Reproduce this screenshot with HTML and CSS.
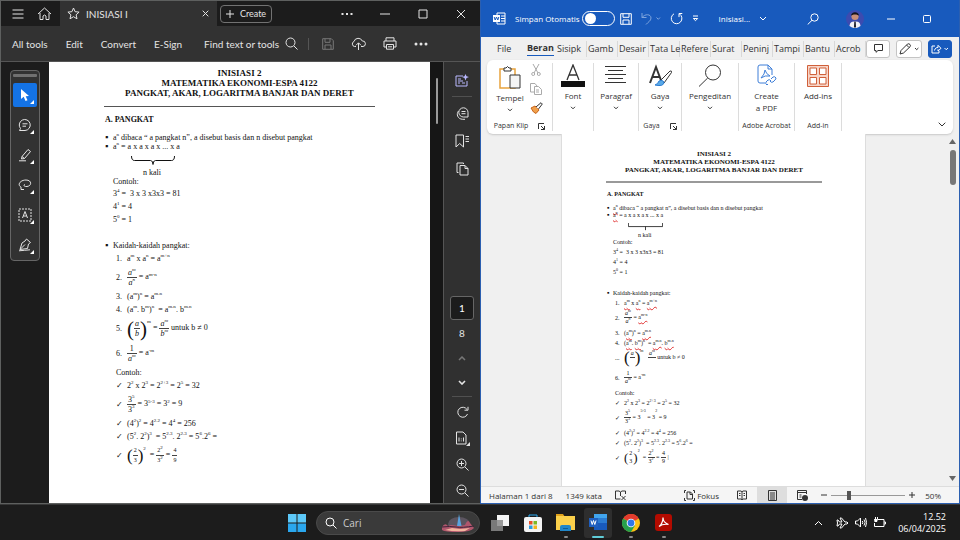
FILE: index.html
```html
<!DOCTYPE html>
<html lang="id">
<head>
    <meta charset="UTF-8">
    <meta name="viewport" content="width=device-width, initial-scale=1.0">
    <title>Inisiasi 2</title>
    <link rel="stylesheet" href="styles.css">
</head>
<body>
<div class="desktop">
    <div class="windows">

        <!-- PDF reader -->
        <section class="reader">
            <header class="reader-title">
                <button class="icon-btn" aria-label="Menu"><svg width="12" height="12" viewBox="0 0 12 12"><path d="M.5 2h11M.5 6h11M.5 10h11"/></svg></button>
                <button class="icon-btn" aria-label="Home"><svg width="15" height="14" viewBox="0 0 15 14"><path d="M1 7 7.500 1 14 7M3 6v6.500h3V9q1.500-2 3 0v3.500h3V6"/></svg></button>
                <div class="reader-tab">
                    <svg width="13" height="13" viewBox="0 0 13 13"><path d="m6.500 1 1.600 3.700 4 .4-3 2.700.9 4-3.500-2.100L3 11.800l.9-4-3-2.700 4-.4z"/></svg>
                    <span class="tab-name">INISIASI I</span>
                    <button class="icon-btn small" aria-label="Close tab"><svg width="7" height="7" viewBox="0 0 7 7"><path d="m.7.7 5.600 5.600M6.300.7.7 6.300"/></svg></button>
                </div>
                <button class="create"><svg width="8" height="8" viewBox="0 0 8 8"><path d="M4 0v8M0 4h8"/></svg>Create</button>
                <div class="win-buttons">
                    <button aria-label="More"><svg width="12" height="4" viewBox="0 0 12 4"><path class="solid" d="M.5 1h2v2h-2zM5 1h2v2H5zM9.500 1h2v2h-2z"/></svg></button>
                    <button aria-label="Minimize"><svg width="10" height="4" viewBox="0 0 10 4"><path d="M0 2h10"/></svg></button>
                    <button aria-label="Maximize"><svg width="10" height="10" viewBox="0 0 10 10"><path d="M1 1h8v8H1z"/></svg></button>
                    <button aria-label="Close"><svg width="10" height="10" viewBox="0 0 10 10"><path d="m1 1 8 8M9 1 1 9"/></svg></button>
                </div>
            </header>

            <nav class="reader-bar">
                <button>All tools</button>
                <button>Edit</button>
                <button>Convert</button>
                <button>E-Sign</button>
                <button class="find">Find text or tools<svg width="13" height="13" viewBox="0 0 13 13"><circle cx="5.500" cy="5.500" r="4.500"/><path d="m9 9 3.500 3.500"/></svg></button>
                <div class="bar-icons">
                    <button class="dim" aria-label="Save"><svg width="12" height="12" viewBox="0 0 12 12"><path d="M.7.7h8.600l2 2v8.600H.7zM3 .7v3.600h5V.7M3 11V7h6v4"/></svg></button>
                    <button aria-label="Upload"><svg width="15" height="13" viewBox="0 0 15 13"><path d="M5 9.500H3.500A2.600 2.600 0 0 1 3 4.500 4.400 4.400 0 0 1 11.300 4a2.700 2.700 0 0 1 .7 5.500h-2M7.500 13V6M5 8.300l2.500-2.500L10 8.300"/></svg></button>
                    <button aria-label="Print"><svg width="14" height="13" viewBox="0 0 14 13"><path d="M3 4V.8h8V4M3 10H1V4h12v6h-2M3.500 7.500h7v4.700h-7zM5 9.800h4"/></svg></button>
                    <button aria-label="More tools"><svg width="14" height="4" viewBox="0 0 14 4"><circle class="solid" cx="2" cy="2" r="1.500"/><circle class="solid" cx="7" cy="2" r="1.500"/><circle class="solid" cx="12" cy="2" r="1.500"/></svg></button>
                </div>
            </nav>

            <div class="reader-body">
                <aside class="left-strip">
                    <div class="palette">
                        <span class="grip"></span>
                        <button class="active" aria-label="Select"><svg width="10" height="14" viewBox="0 0 10 14"><path class="solid" d="M1 1v10l2.700-2.200L5.500 13l2-.8-1.800-4L9 8z"/></svg></button>
                        <button aria-label="Comment"><svg width="14" height="14" viewBox="0 0 14 14"><path d="M7 12.500H1.500l1-2A5.500 5.500 0 1 1 7 12.500zM4.500 5.800h5M4.500 8.200h3.500"/></svg></button>
                        <button aria-label="Highlight"><svg width="14" height="14" viewBox="0 0 14 14"><path d="M4 8.500 10 1.500l2.500 2-6 7-3 .5zM1 12.800h7M4 8.500l2.500 2"/></svg></button>
                        <button aria-label="Draw"><svg width="14" height="12" viewBox="0 0 14 12"><path d="M3 8C-1 6 2 1 8 1c6 0 6 6 1 6.500-3 .3-4-1.500-2-2M3 8v2.500h3"/></svg></button>
                        <button aria-label="Text box"><svg width="14" height="14" viewBox="0 0 14 14"><path stroke-dasharray="2 1" d="M1 1h12v12H1z"/><path d="m4.500 10 2.500-6.500L9.500 10M5.400 8h3.200"/></svg></button>
                        <button aria-label="Sign"><svg width="14" height="14" viewBox="0 0 14 14"><path d="m8.500 1 4 3.500-2 1.500-1 4.500L2 11.500 4 5l3-2zM2 11.500 7 6.500M1 12.800c4 0 7-1 11-1"/></svg></button>
                    </div>
                </aside>

                <div class="reader-page">
                    <article class="doc doc-large">
                        <h1>INISIASI 2<br>MATEMATIKA EKONOMI-ESPA 4122<br>PANGKAT, AKAR, LOGARITMA BANJAR DAN DERET</h1>
                        <h2>A. PANGKAT</h2>
                        <p class="line"><b class="dot">▪</b><span>a<sup>n</sup> dibaca “ a pangkat n”, a disebut basis dan n disebut pangkat</span></p>
                        <p class="line"><b class="dot">▪</b><span>a<sup>n</sup> = a x a x a x ... x a</span></p>
                        <div class="brace"><svg viewBox="0 0 44 10"><path d="M.5 0q0 4.500 3 4.500h16q2.500 0 2.500 4 0-4 2.500-4h16q3 0 3-4.500"/></svg></div>
                        <p class="line under">n kali</p>
                        <p class="line in">Contoh:</p>
                        <p class="step in first">3<sup>4</sup> =&nbsp; 3 x 3 x3x3 = 81</p>
                        <p class="step in">4<sup>1</sup> = 4</p>
                        <p class="step in">5<sup>0</sup> = 1</p>
                        <p class="step rules"><b class="dot">▪</b><span>Kaidah-kaidah pangkat:</span></p>
                        <p class="step item"><i>1.</i><span>a<sup>m</sup> x a<sup>n</sup> = a<sup>m+n</sup></span></p>
                        <p class="tall item"><i>2.</i><span><span class="frac var"><span>a<sup>m</sup></span><span>a<sup>n</sup></span></span> = a<sup>m-n</sup></span></p>
                        <p class="step item"><i>3.</i><span>(a<sup>m</sup>)<sup>n</sup> = a<sup>m.n</sup></span></p>
                        <p class="step item"><i>4.</i><span>(a<sup>m</sup>. b<sup>m</sup>)<sup>n</sup>&nbsp; = a<sup>m.n</sup>. b<sup>m.n</sup></span></p>
                        <p class="tall item"><i>5.</i><span><span class="big">(</span><span class="frac var"><span>a</span><span>b</span></span><span class="big">)</span><sup class="high">m</sup> = <span class="frac var"><span>a<sup>m</sup></span><span>b<sup>m</sup></span></span> untuk b ≠ 0</span></p>
                        <p class="tall item"><i>6.</i><span><span class="frac"><span>1</span><span class="var">a<sup>m</sup></span></span> = a<sup>-m</sup></span></p>
                        <p class="step sub">Contoh:</p>
                        <p class="step item"><i>✓</i><span>2<sup>2</sup> x 2<sup>3</sup> = 2<sup>2+3</sup> = 2<sup>5</sup> = 32</span></p>
                        <p class="tall item"><i>✓</i><span><span class="frac"><span>3<sup>5</sup></span><span>3<sup>3</sup></span></span> = 3<sup>5-3</sup> = 3<sup>2</sup> = 9</span></p>
                        <p class="step item"><i>✓</i><span>(4<sup>2</sup>)<sup>2</sup> = 4<sup>2.2</sup> = 4<sup>4</sup> = 256</span></p>
                        <p class="step item"><i>✓</i><span>(5<sup>2</sup>. 2<sup>2</sup>)<sup>3</sup>&nbsp; = 5<sup>2.3</sup>. 2<sup>2.3</sup> = 5<sup>6</sup>.2<sup>6</sup> =</span></p>
                        <p class="tall item"><i>✓</i><span><span class="mid">(</span><span class="frac tiny"><span>2</span><span>3</span></span><span class="mid">)</span><sup class="high">2</sup>&nbsp; = <span class="frac tiny"><span>2<sup>2</sup></span><span>3<sup>2</sup></span></span> = <span class="frac tiny"><span>4</span><span>9</span></span></span></p>
                    </article>
                </div>

                <div class="reader-scroll"><span></span></div>

                <aside class="right-strip">
                    <div class="strip-group panels">
                        <button class="lilac" aria-label="AI assistant"><svg width="14" height="13" viewBox="0 0 14 13"><path d="M8 2H1v10h11V7M3 5h3M3 9h2M7 9h3M3 7h5"/><path class="solid" d="m10.500 0 1 2.200L14 3l-2.500 1-1 2.500-1-2.500L7 3l2.500-.8z"/></svg></button>
                        <hr>
                        <button aria-label="Comments"><svg width="13" height="13" viewBox="0 0 13 13"><path d="M7.500 10A4.600 4.600 0 1 1 12 5.500V10zM5.500 4.500h4M5.500 6.700h4M2.500 4C0 7 1.500 12 6.500 12.300H9"/></svg></button>
                        <button aria-label="Bookmarks"><svg width="14" height="14" viewBox="0 0 14 14"><path d="M1 1h7.500v12L4.700 9.500 1 13zM10.500 2.500H14M10.500 5H14M10.500 7.500H14"/></svg></button>
                        <button aria-label="Pages"><svg width="13" height="14" viewBox="0 0 13 14"><path d="M4 3.500h5l3 3V13H4zM9 3.500v3h3M2.500 10.500H1V1h6.500v1"/></svg></button>
                    </div>
                    <div class="strip-group">
                        <input class="page-no" type="text" value="1" aria-label="Page">
                        <span class="page-count">8</span>
                        <button class="turn dim" aria-label="Previous page"><svg width="8" height="5" viewBox="0 0 8 5"><path stroke-width="1.500" d="m1 4 3-3 3 3"/></svg></button>
                        <button class="turn" aria-label="Next page"><svg width="8" height="5" viewBox="0 0 8 5"><path stroke-width="1.600" d="m1 1 3 3 3-3"/></svg></button>
                        <hr>
                        <button aria-label="Rotate"><svg width="13" height="13" viewBox="0 0 13 13"><path d="M11 3.500A5 5 0 1 0 11.500 8M12 .8v3.400H8.500"/></svg></button>
                        <button aria-label="Actual size"><svg width="15" height="15" viewBox="0 0 15 15"><path d="M1.500 1H8l3 3v9H1.500zM4 6.500v4M8.500 6.500v4M6.300 7.500v.8M6.300 9.500v.8"/><path class="solid" d="M15 11v4h-4z"/></svg></button>
                        <button aria-label="Zoom in"><svg width="13" height="13" viewBox="0 0 13 13"><circle cx="5.500" cy="5.500" r="4.500"/><path d="m9 9 3.500 3.500M3 5.500h5M5.500 3v5"/></svg></button>
                        <button aria-label="Zoom out"><svg width="13" height="13" viewBox="0 0 13 13"><circle cx="5.500" cy="5.500" r="4.500"/><path d="m9 9 3.500 3.500M3 5.500h5"/></svg></button>
                    </div>
                </aside>
            </div>
        </section>

        <!-- Word processor -->
        <section class="word">
            <header class="word-title">
                <svg width="13" height="13" viewBox="0 0 13 13"><path d="M4 3V1h8v11H4v-2M8 4h4M8 6.500h4M8 9h4"/><path fill="#fff" stroke="none" d="M0 3h7v7H0z"/><path stroke="#185abd" d="m1.200 5 1 3 1.300-3 1.300 3 1-3"/></svg>
                <label class="autosave">Simpan Otomatis<input type="checkbox" role="switch"></label>
                <button aria-label="Simpan"><svg width="12" height="12" viewBox="0 0 12 12"><path d="M.7.7h10.600v10.600H.7zM3 .7v3.600h6V.7M3 11V7h6v4"/></svg></button>
                <button class="faded" aria-label="Urungkan"><svg width="20" height="13" viewBox="0 0 20 13"><path d="M1 1v4.500h4.500M1 5.500C4 1.500 10 2 10 6c0 3-3 4-5 6.500M15.500 5.500l1.800 1.800L19 5.500"/></svg></button>
                <button aria-label="Ulangi"><svg width="13" height="13" viewBox="0 0 13 13"><path d="M4 1.800A5.300 5.300 0 1 0 9.500 2M12.300 1.500H9v3.600"/></svg></button>
                <button aria-label="Kustomisasi"><svg width="7" height="7" viewBox="0 0 7 7"><path d="M1 1h5M1.300 3.500h4.400L3.500 5.700z"/></svg></button>
                <button class="file-name">Inisiasi...<svg width="8" height="5" viewBox="0 0 8 5"><path d="m1 1 3 3 3-3"/></svg></button>
                <div class="word-right">
                    <button aria-label="Cari"><svg width="12" height="12" viewBox="0 0 12 12"><circle cx="7.500" cy="4.500" r="3.700"/><path d="M5 7.300.7 11.500"/></svg></button>
                    <button aria-label="Akun"><svg width="18" height="18" viewBox="0 0 18 18"><circle cx="9" cy="9" r="9" fill="#3c4bb0" stroke="none"/><path d="M3.500 16c.5-4 2.500-4.500 5.500-4.500s5 .5 5.500 4.500a9 9 0 0 1-11 0" fill="#f2f2f8" stroke="none"/><circle cx="9" cy="6.500" r="3.600" fill="#c98f77" stroke="none"/><path d="M5 6c0-5 8-5 8 0-1-2-7-2-8 0" fill="#17151c" stroke="none"/><path d="M8.300 11.500h1.400l.4 6H7.900z" fill="#20222e" stroke="none"/></svg></button>
                    <button aria-label="Minimalkan"><svg width="8" height="4" viewBox="0 0 8 4"><path d="M0 2h8"/></svg></button>
                    <button aria-label="Maksimalkan"><svg width="8" height="8" viewBox="0 0 8 8"><rect x=".5" y=".5" width="7" height="7" rx="1"/></svg></button>
                </div>
            </header>

            <nav class="word-tabs">
                <button class="file">File</button>
                <button class="current"><span>Beran</span></button>
                <button>Sisipk</button>
                <button>Gamb</button>
                <button>Desair</button>
                <button>Tata Le</button>
                <button>Refere</button>
                <button>Surat</button>
                <button>Peninj</button>
                <button>Tampi</button>
                <button>Bantu</button>
                <button>Acrob</button>
                <div class="tab-actions">
                    <button aria-label="Komentar"><svg width="9" height="9" viewBox="0 0 9 9"><path d="M.5.5h8v6H4L2 8.300V6.500H.5z"/></svg></button>
                    <button aria-label="Pengeditan"><svg width="20" height="12" viewBox="0 0 20 12"><path d="m1 11 1-3.500L8.500 1Q10 .3 11 1.500t0 2.300L4.500 10zM7.500 2l2.500 2.500M16 5l1.700 1.700L19.400 5"/></svg></button>
                    <button class="share" aria-label="Bagikan"><svg width="18" height="10" viewBox="0 0 18 10"><path d="M4 2H1v7h7V7M3.500 6.500C4 4 5.500 3.500 7 3.500V1.300l3 3-3 2.700V5.300M13.500 4l1.700 1.700L17 4"/></svg></button>
                </div>
            </nav>

            <div class="ribbon">
                <div class="group clip">
                    <div class="clip-tools">
                        <button class="tool"><svg width="22" height="23" viewBox="0 0 22 23"><path fill="#fff" stroke="#e8a33d" stroke-width="1.500" d="M1 3h15v19H1z"/><path fill="#fff" d="M5 2h2q1.500-3 3 0h2v3H5z"/><path fill="#f4f4f4" d="M11 9h10v13H11z"/></svg>Tempel<svg class="chev" width="6" height="4" viewBox="0 0 6 4"><path d="m1 .8 2 2 2-2"/></svg></button>
                        <div class="clip-side">
                            <button class="pale" aria-label="Potong"><svg width="10" height="12" viewBox="0 0 10 12"><path d="M2 0l5 9M8 0 3 9"/><circle cx="2.200" cy="10" r="1.500"/><circle cx="7.800" cy="10" r="1.500"/></svg></button>
                            <button class="pale" aria-label="Salin"><svg width="12" height="12" viewBox="0 0 12 12"><path d="M4 9H.5V.5H5L7 3M4.500 3.500h4l3 3v5h-7zM6 7h3M6 9h3"/></svg></button>
                            <button aria-label="Pemformat"><svg width="13" height="12" viewBox="0 0 13 12"><path fill="#f0a04b" stroke="#c8641b" d="m1 6 4-2 4 4-3 3.500L3.500 10z"/><path fill="#fff" d="M6 5 11 .7l1.300 1.300L8.500 7"/></svg></button>
                        </div>
                    </div>
                    <span class="caption">Papan Klip<svg width="7" height="7" viewBox="0 0 7 7"><path d="M.5 6V.5H6M3 3l3.500 3.500M6.500 3v3.500H3"/></svg></span>
                </div>
                <div class="group font">
                    <button class="tool"><svg width="24" height="23" viewBox="0 0 24 23"><path stroke-width="1.300" d="m6 16 6-15 6 15M8 11h8"/><path fill="#111" stroke="none" d="M0 17h24v6H0z"/></svg>Font<svg class="chev" width="6" height="4" viewBox="0 0 6 4"><path d="m1 .8 2 2 2-2"/></svg></button>
                </div>
                <div class="group para">
                    <button class="tool"><svg width="21" height="23" viewBox="0 0 21 23"><path d="M0 2.500h21M3 6.500h15M0 10.500h21M3 14.500h15M0 18.500h21"/></svg>Paragraf<svg class="chev" width="6" height="4" viewBox="0 0 6 4"><path d="m1 .8 2 2 2-2"/></svg></button>
                </div>
                <div class="group style">
                    <button class="tool"><svg width="23" height="23" viewBox="0 0 23 23"><path stroke-width="2" d="M1 19 7 3l6 16M3 13h8"/><path fill="#fff" d="M12 16 21 7q2-.5 1.500 1.500L15 19z"/><path fill="#5aa9e6" stroke="#2b7cd3" d="M6 21q3-1 4-4 3-2 5 1 0 5-9 3z"/></svg>Gaya<svg class="chev" width="6" height="4" viewBox="0 0 6 4"><path d="m1 .8 2 2 2-2"/></svg></button>
                    <span class="caption">Gaya<svg width="7" height="7" viewBox="0 0 7 7"><path d="M.5 6V.5H6M3 3l3.500 3.500M6.500 3v3.500H3"/></svg></span>
                </div>
                <div class="group edit">
                    <button class="tool"><svg width="24" height="23" viewBox="0 0 24 23"><circle cx="15" cy="8.500" r="7.500"/><path d="M9.700 14 1 22.500"/></svg>Pengeditan<svg class="chev" width="6" height="4" viewBox="0 0 6 4"><path d="m1 .8 2 2 2-2"/></svg></button>
                </div>
                <div class="group acro">
                    <button class="tool"><svg class="pdf" width="20" height="23" viewBox="0 0 20 23"><path d="M8 19H3q-2 0-2-2V3q0-2 2-2h8l4 4v6M11 1v4h4"/><path d="M4 14q4-4 4-8 1 4 5 6-5-1-9 2M11 20l-1 1q-2-1-1-3l2-2q2-1 3 1M14 15l2-2q2-1 3 1 0 1-1 2l-2 2q-2 1-3-1"/></svg><span>Create<br>a PDF</span></button>
                    <span class="caption">Adobe Acrobat</span>
                </div>
                <div class="group addin">
                    <button class="tool"><svg class="grid-icon" width="22" height="23" viewBox="0 0 22 23"><path fill="#f8d5c8" d="M.5 1.500h21v21H.5z"/><path fill="#fff" d="M3 4h6.500v6.500H3zM12.500 4H19v6.500h-6.500zM3 13.500h6.500V20H3zM12.500 13.500H19V20h-6.500z"/></svg>Add-ins</button>
                    <span class="caption">Add-in</span>
                </div>
                <button class="collapse" aria-label="Ciutkan pita"><svg width="8" height="5" viewBox="0 0 8 5"><path d="m.7.7 3.300 3.300L7.300.7"/></svg></button>
            </div>

            <div class="word-body">
                <div class="word-page">
                    <article class="doc doc-small">
                        <h1>INISIASI 2<br>MATEMATIKA EKONOMI-ESPA 4122<br>PANGKAT, AKAR, LOGARITMA BANJAR DAN DERET</h1>
                        <h2>A. PANGKAT</h2>
                        <p class="line"><b class="dot">▪</b><span><u>a<sup>n</sup></u> dibaca “ a pangkat n”, a disebut basis dan n disebut pangkat</span></p>
                        <p class="line"><b class="dot">▪</b><span><u>a<sup>n</sup></u> = a x a x a x ... x a</span></p>
                        <div class="brace"><svg viewBox="0 0 44 10"><path d="M.5 0v4.500h43V0M22 4.500V9"/></svg></div>
                        <p class="line under">n kali</p>
                        <p class="line in">Contoh:</p>
                        <p class="step in first">3<sup>4</sup> =&nbsp; 3 x 3 x3x3 = 81</p>
                        <p class="step in">4<sup>1</sup> = 4</p>
                        <p class="step in">5<sup>0</sup> = 1</p>
                        <p class="step rules"><b class="dot">▪</b><span>Kaidah-kaidah pangkat:</span></p>
                        <p class="step item"><i>1.</i><span><u>a<sup>m</sup></u> x <u>a<sup>n</sup></u> = <u>a<sup>m+n</sup></u></span></p>
                        <p class="tall item"><i>2.</i><span><span class="frac var"><span>a<sup>m</sup></span><span>a<sup>n</sup></span></span> = <u>a<sup>m-n</sup></u></span></p>
                        <p class="step item"><i>3.</i><span>(<u>a<sup>m</sup></u>)<sup>n</sup> = <u>a<sup>m.n</sup></u></span></p>
                        <p class="step item"><i>4.</i><span>(<u>a<sup>m</sup></u>. <u>b<sup>m</sup></u>)<sup>n</sup>&nbsp; = <u>a<sup>m.n</sup></u>. <u>b<sup>m.n</sup></u></span></p>
                        <p class="tall item"><i>...</i><span><span class="big">(</span><span class="frac var"><span>a</span><span>&nbsp;</span></span><span class="big">)</span><sup class="high">m</sup>&nbsp;&nbsp; <span class="frac var"><span>a<sup>m</sup></span><span>&nbsp;</span></span> untuk b ≠ 0</span></p>
                        <p class="tall item"><i>6.</i><span><span class="frac"><span>1</span><span class="var">a<sup>m</sup></span></span> = a<sup>-m</sup></span></p>
                        <p class="step sub">Contoh:</p>
                        <p class="step item"><i>✓</i><span>2<sup>2</sup> x 2<sup>3</sup> = 2<sup>2+3</sup> = 2<sup>5</sup> = 32</span></p>
                        <p class="tall item"><i>✓</i><span><span class="frac"><span>3<sup>5</sup></span><span>3<sup>3</sup></span></span> = 3<sup class="high">5-3</sup> = 3<sup class="high">2</sup> = 9</span></p>
                        <p class="step item"><i>✓</i><span>(4<sup>2</sup>)<sup>2</sup> = 4<sup>2.2</sup> = 4<sup>4</sup> = 256</span></p>
                        <p class="step item"><i>✓</i><span>(5<sup>2</sup>. 2<sup>2</sup>)<sup>3</sup>&nbsp; = 5<sup>2.3</sup>. 2<sup>2.3</sup> = 5<sup>6</sup>.2<sup>6</sup> =</span></p>
                        <p class="tall item"><i>✓</i><span><span class="mid">(</span><span class="frac tiny bare"><span>2</span><span>3</span></span><span class="mid">)</span><sup class="high">2</sup>&nbsp; = <span class="frac tiny"><span>2<sup>2</sup></span><span>3<sup>2</sup></span></span> = <span class="frac tiny"><span>4</span><span>9</span></span> |</span></p>
                    </article>
                </div>
                <div class="word-scroll">
                    <svg width="7" height="5" viewBox="0 0 7 5"><path class="solid" d="M0 5 3.500 0 7 5z"/></svg>
                    <span></span>
                    <svg width="7" height="5" viewBox="0 0 7 5"><path class="solid" d="M0 0 3.500 5 7 0z"/></svg>
                </div>
            </div>

            <footer class="status">
                <span>Halaman 1 dari 8</span>
                <span>1349 kata</span>
                <button aria-label="Pemeriksaan"><svg width="11" height="10" viewBox="0 0 11 10"><path d="M5.500 9H.5V1h3.500l1.500 1L7 1h3.500v3M5.500 2v4M6.500 6l4 4M10.500 6l-4 4"/></svg></button>
                <div class="status-right">
                    <button class="focus"><svg width="11" height="11" viewBox="0 0 11 11"><path d="M.5 3V.5H2M9 .5h1.500V3M.5 8v2.500H2M9 10.500h1.500V8M3 2h3.500L8.500 4v5H3zM6 2v2.500h2.500"/></svg>Fokus</button>
                    <button class="view" aria-label="Mode baca"><svg width="10" height="10" viewBox="0 0 10 10"><path d="M.5 1H4l1 .8L6 1h3.500v8H6l-1 .8L4 9H.5zM5 2v7.500M2 3.500h1.500M2 5.500h1.500M6.500 3.500H8M6.500 5.500H8"/></svg></button>
                    <button class="view on" aria-label="Tata letak cetak"><svg width="9" height="11" viewBox="0 0 9 11"><path d="M.5.5h8v10h-8zM2 3h5M2 5h5M2 7h5M2 9h5"/></svg></button>
                    <button class="view" aria-label="Tata letak web"><svg width="11" height="11" viewBox="0 0 11 11"><path d="M5 9.500H.5v-9h9V4M.5 2.500h9M2.500 5h2M2.500 7h2"/><circle class="solid" cx="8" cy="8" r="3"/></svg></button>
                    <button class="zoom-step" aria-label="Perkecil"><svg width="6" height="6" viewBox="0 0 6 6"><path d="M0 3h6"/></svg></button>
                    <input class="zoom" type="range" min="0" max="100" value="23" aria-label="Zoom">
                    <button class="zoom-step" aria-label="Perbesar"><svg width="6" height="6" viewBox="0 0 6 6"><path d="M0 3h6M3 0v6"/></svg></button>
                    <span class="percent">50%</span>
                </div>
            </footer>
        </section>
    </div>

    <!-- Taskbar -->
    <footer class="taskbar">
        <div class="apps">
            <button aria-label="Start"><svg width="18" height="18" viewBox="0 0 18 18"><path fill="#5cc8f8" stroke="none" d="M0 0h8.500v8.500H0zM9.500 0H18v8.500H9.500z"/><path fill="#2aa7ee" stroke="none" d="M0 9.500h8.500V18H0zM9.500 9.500H18V18H9.500z"/></svg></button>
            <label class="search">
                <svg width="12" height="12" viewBox="0 0 12 12"><circle cx="5" cy="5" r="4"/><path d="m8 8 3.500 3.500"/></svg>
                <input type="text" placeholder="Cari" aria-label="Cari">
                <svg width="34" height="20" viewBox="0 0 34 20"><ellipse cx="18" cy="11" rx="11" ry="7" fill="#5c5560" stroke="none"/><path fill="#b0566c" stroke="none" d="M1 14q3-5 6-1l3-1 8 1 6-1q3-7 5-2l4 5q-3 4-16 4T1 17z"/><path fill="#5aa4e0" stroke="none" d="m16 13 2-12 2.500 12z"/><path fill="#f2b59f" stroke="none" d="m4 17 7-2 8 1 10-1-5 3q-10 1-20-1z"/><path stroke="#3b2337" d="M1 14q8-1 14 0t18-1"/></svg>
            </label>
            <button aria-label="Task view"><svg width="18" height="16" viewBox="0 0 18 16"><path fill="#f4f4f4" stroke="none" d="M6 0h12v11H6z"/><path fill="#8a8a8a" fill-opacity=".85" stroke="none" d="M0 5h12v11H0z"/></svg></button>
            <button aria-label="Store"><svg width="18" height="18" viewBox="0 0 18 18"><path stroke="#2aa7ee" d="M5 4V1h8v3"/><rect y="3" width="18" height="15" rx="2" fill="#f4f4f4" stroke="none"/><path fill="#e8502a" stroke="none" d="M5 7h3.500v3.500H5z"/><path fill="#7db928" stroke="none" d="M9.500 7H13v3.500H9.500z"/><path fill="#2a9be0" stroke="none" d="M5 11.500h3.500V15H5z"/><path fill="#f5b51e" stroke="none" d="M9.500 11.500H13V15H9.500z"/></svg></button>
            <button class="open" aria-label="Explorer"><svg width="19" height="17" viewBox="0 0 19 17"><path fill="#e0a11b" stroke="none" d="M0 0h7l2 3H0z"/><path fill="#fbd04b" stroke="none" d="M0 2h19v14H0z"/><path fill="#1f86c9" stroke="none" d="M4 17v-4q0-2 2-2h7q2 0 2 2v4z"/><path stroke="#0f5c94" d="M7 14.500h5"/></svg></button>
            <button class="open focused" aria-label="Word"><svg width="19" height="17" viewBox="0 0 19 17"><path fill="#41a5ee" stroke="none" d="M5 0h13v5H5z"/><path fill="#2b7cd3" stroke="none" d="M5 4h13v5H5z"/><path fill="#185abd" stroke="none" d="M5 9h13v7H5z"/><path fill="#1f5fbf" stroke="none" d="M0 4h9v9H0z"/><path stroke="#fff" d="m2 6.500 1.200 4 1.300-4 1.300 4L7 6.500"/></svg></button>
            <button class="open" aria-label="Chrome"><svg width="18" height="18" viewBox="0 0 18 18"><circle cx="9" cy="9" r="9" fill="#fbc116" stroke="none"/><path fill="#e33b2e" stroke="none" d="M9 9 1.200 4.500a9 9 0 0 1 15.600 0z"/><path fill="#27a04b" stroke="none" d="M9 9 1.200 4.500A9 9 0 0 0 9 18l4-6.500z"/><circle cx="9" cy="9" r="4.300" fill="#fff" stroke="none"/><circle cx="9" cy="9" r="3.400" fill="#2f76e8" stroke="none"/></svg></button>
            <button class="open" aria-label="Acrobat"><svg width="17" height="17" viewBox="0 0 17 17"><rect width="17" height="17" rx="3" fill="#b30b00" stroke="none"/><path stroke="#fff" stroke-width="1.200" d="M4 12.500q4-3 4-9 0 5 5.500 7Q8 9.500 4 12.500z"/></svg></button>
        </div>
        <div class="tray">
            <button aria-label="Hidden icons"><svg width="9" height="6" viewBox="0 0 9 6"><path d="m1 5 3.500-3.500L8 5"/></svg></button>
            <button aria-label="Airplane mode"><svg width="13" height="12" viewBox="0 0 13 12"><path d="M1 3h1l1.500 2H6L4 1h1.500L9 5h2q2 1 0 2H9l-3.500 4H4l2-4H3.500L2 9H1l.5-3z"/></svg></button>
            <button aria-label="Volume"><svg width="12" height="11" viewBox="0 0 12 11"><path d="M.5 4h2l3-3v9l-3-3h-2zM7.300 4q1 1.500 0 3M9 2.500q2.200 3 0 6M10.500 1q2.200 4.500 0 9"/></svg></button>
            <button aria-label="Battery"><svg width="13" height="11" viewBox="0 0 13 11"><path d="M5 2.500h6v7H1.500V6M11 5h1.500v2H11"/><path class="solid" d="M1 2h1V0h1v2h1V0h1v2l-1 3H1.500z"/></svg></button>
            <time class="clock">12.52<br>06/04/2025</time>
        </div>
    </footer>
</div>
</body>
</html>
```
FILE: styles.css
```css
* {
    margin: 0;
    padding: 0;
    box-sizing: border-box;
}

body {
    font-family: 'Open Sans', 'Noto Sans', sans-serif;
    font-size: 9px;
    background: #1c1c1c;
    overflow: hidden;
}

button {
    background: none;
    border: none;
    color: inherit;
    font: inherit;
    display: flex;
    align-items: center;
    justify-content: center;
    flex-shrink: 0;
    white-space: nowrap;
}

svg {
    display: block;
    flex-shrink: 0;
    fill: none;
    stroke: currentColor;
}

.solid {
    fill: currentColor;
    stroke: none;
}

.desktop {
    height: 100vh;
    display: grid;
    grid-template-rows: minmax(0, 1fr) 36px;
}

.windows {
    display: grid;
    grid-template-columns: minmax(0, 1fr) minmax(0, 1fr);
    min-height: 0;
}

/* PDF reader */

.reader {
    display: flex;
    flex-direction: column;
    min-height: 0;
    background: #323232;
    color: #e4e4e4;
    border: 1px solid #5e605f;
    border-right: none;
    font-family: Lato, 'Open Sans', sans-serif;
    font-size: 10px;
}

.reader-title {
    display: flex;
    align-items: center;
    height: 25px;
    padding-left: 3px;
    background: #1c1c1c;
}

.reader-title .icon-btn {
    width: 27px;
}

.reader-tab {
    display: flex;
    align-items: center;
    align-self: stretch;
    width: 157px;
    margin: 0 3px 0 2px;
    padding: 0 7px;
    background: #323232;
}

.tab-name {
    flex: 1;
    padding-left: 6px;
}

.reader-title .small {
    width: 10px;
}

.create {
    width: 52px;
    height: 18px;
    gap: 6px;
    border: 1px solid #727272;
    border-radius: 4px;
    font-size: 9px;
}

.win-buttons {
    display: flex;
    margin-left: auto;
}

.win-buttons button {
    width: 38px;
    height: 24px;
}

.reader-bar {
    display: flex;
    align-items: center;
    height: 36px;
    padding-left: 11px;
    gap: 18px;
    border-bottom: 1px solid #555;
}

.find {
    margin-left: 4px;
    gap: 6px;
}

.bar-icons {
    display: flex;
    align-items: center;
    margin-left: -8px;
    padding-left: 3px;
    border-left: 1px solid #555;
    height: 12px;
}

.bar-icons button {
    width: 31px;
}

.dim {
    color: #777;
}

.reader-body {
    flex: 1;
    display: flex;
    min-height: 0;
}

.left-strip {
    width: 48px;
    flex-shrink: 0;
    padding: 8px 9px;
    background: #1c1c1c;
}

.palette {
    display: flex;
    flex-direction: column;
    align-items: center;
    gap: 6px;
    padding: 3px 0;
    border: 1px solid #666;
    border-radius: 4px;
    background: #323232;
}

.grip {
    width: 24px;
    height: 3px;
    border-radius: 1px;
    background: #707070;
}

.palette button {
    position: relative;
    width: 24px;
    height: 24px;
    border-radius: 2px;
}

/* corner mark of tools that open a submenu */
.palette button::after {
    content: '';
    position: absolute;
    right: 3px;
    bottom: 3px;
    border: 2px solid #fff;
    border-top-color: transparent;
    border-left-color: transparent;
}

.palette .active {
    background: #1473e6;
    color: #fff;
}

.reader-page {
    flex: 1;
    min-width: 0;
    padding: 6px 55px 0;
    overflow: hidden;
    background: #fff;
}

.reader-scroll {
    width: 13px;
    padding: 16px 5px 0 6px;
    background: #161616;
}

.reader-scroll span {
    display: block;
    height: 46px;
    border-radius: 1px;
    background: #9a9a9a;
}

.right-strip {
    display: flex;
    flex-direction: column;
    justify-content: space-between;
    width: 37px;
    padding: 4px 0 0;
    border-left: 1px solid #555;
    background: #303030;
}

.strip-group {
    display: flex;
    flex-direction: column;
    align-items: center;
}

.strip-group button {
    width: 26px;
    height: 26px;
}

.panels button {
    height: 28px;
}

.strip-group .turn {
    height: 24px;
}

.strip-group hr {
    width: 20px;
    border: none;
    border-top: 1px solid #505050;
    margin: 2px 0;
}

.lilac {
    color: #b9b8ff;
}

.page-no {
    width: 24px;
    height: 24px;
    border: 1px solid #666;
    border-radius: 3px;
    background: #1c1c1c;
    color: #fff;
    font: inherit;
    text-align: center;
}

.page-count {
    line-height: 26px;
}

/* Documents */

.doc {
    font-family: 'Liberation Serif', serif;
    font-size: var(--text);
    line-height: 1;
    color: #111;
    white-space: nowrap;
}

.doc-large {
    --text: 8px;
    --head: 9px;
    --small: 5px;
    --line: 9px;
    --step: 13px;
    --tall: 25px;
    --gap: 8px;
    --space: 13px;
    --indent: 9px;
    --item: 12px;
    --mark: 11px;
    --head-line: 10px;
    --brace: 44px;
    --paren: 21px;
}

.doc-small {
    --text: 6px;
    --head: 7px;
    --small: 4px;
    --line: 7px;
    --step: 10px;
    --tall: 20px;
    --gap: 7px;
    --space: 11px;
    --indent: 7px;
    --item: 9px;
    --mark: 9px;
    --head-line: 8px;
    --brace: 35px;
    --paren: 17px;
}

.doc h1 {
    font-size: var(--head);
    line-height: var(--head-line);
    text-align: center;
    padding-bottom: var(--gap);
    border-bottom: 1px solid #555;
}

.doc-small h1 {
    border-bottom: 2px solid #999;
}

.doc h2 {
    font-size: var(--text);
    line-height: var(--head-line);
    margin: var(--gap) 0;
    padding-left: 1px;
}

.doc sup {
    font-size: var(--small);
    line-height: 0;
}

.doc u {
    text-decoration: underline wavy #e03030 1px;
    text-decoration-skip-ink: none;
}

.line,
.step,
.tall {
    display: flex;
    align-items: center;
}

.doc p.in,
.doc p.sub,
.doc p.under {
    display: block;
}

.line {
    height: var(--line);
    line-height: var(--line);
}

.step {
    height: var(--step);
    line-height: var(--step);
}

.tall {
    height: var(--tall);
}

.dot {
    width: var(--indent);
    padding-left: 1px;
    font-size: var(--line);
}

.in {
    padding-left: var(--indent);
}

.first {
    margin-top: 1px;
}

.rules {
    margin-top: var(--space);
}

.item {
    padding-left: var(--item);
}

.sub {
    padding-left: var(--item);
}

.item i {
    width: var(--mark);
    font-style: normal;
}

.brace {
    padding: 5px 0 2px calc(var(--indent) * 3);
}

.brace svg {
    width: var(--brace);
}

.doc-small .brace {
    padding: 4px 0 1px 22px;
}

.under {
    padding-left: calc(var(--indent) * 4 + 3px);
}

.doc-small .under {
    padding-left: 32px;
}

.frac {
    display: inline-flex;
    flex-direction: column;
    align-items: center;
    vertical-align: middle;
    line-height: var(--line);
}

.frac > span {
    padding: 0 1px;
}

.frac > span:last-child {
    border-top: 1px solid #444;
    align-self: stretch;
    text-align: center;
}

.frac.bare > span:last-child {
    border-top-color: transparent;
}

.var {
    font-style: italic;
}

.tiny {
    font-size: 6px;
    line-height: var(--line);
}

.big,
.mid {
    font-size: var(--paren);
    line-height: 0;
    vertical-align: middle;
}

.mid {
    font-size: calc(var(--paren) - 4px);
}

.doc sup.high {
    vertical-align: 7px;
}

/* Word processor */

.word {
    display: flex;
    flex-direction: column;
    min-height: 0;
    border: 1px solid #2b5fb0;
    border-top: none;
    background: #f0f0f0;
    color: #333;
}

.word-title {
    display: flex;
    align-items: center;
    height: 37px;
    padding: 0 14px 0 12px;
    background: #185abd;
    color: #fff;
    font-size: 8px;
}

.word-title > button {
    margin-left: 9px;
}

.autosave {
    display: flex;
    align-items: center;
    gap: 2px;
    margin-left: 9px;
    margin-right: -4px;
}

.autosave input {
    appearance: none;
    display: flex;
    align-items: center;
    width: 33px;
    height: 15px;
    padding-left: 2px;
    border: 1px solid #fff;
    border-radius: 8px;
}

.autosave input::before {
    content: '';
    width: 11px;
    height: 11px;
    border-radius: 50%;
    background: #fff;
}

.faded {
    color: #7fa5de;
}

.word-title .file-name {
    margin-left: 20px;
    gap: 9px;
}

.word-right {
    display: flex;
    margin-left: auto;
}

.word-right button {
    width: 36px;
    margin-left: 0;
}

.word-right button:first-child {
    width: 48px;
}

.word-tabs {
    display: flex;
    align-items: center;
    height: 23px;
    padding-right: 8px;
}

.word-tabs > button {
    justify-content: flex-start;
    width: 31px;
    height: 16px;
    padding-left: 1px;
    border-right: 1px solid #d8d8d8;
}

.word-tabs .file,
.word-tabs .current {
    width: 30px;
    border-right: none;
}

.word-tabs .file {
    width: 45px;
    padding-left: 16px;
}

.word-tabs .current {
    font-weight: bold;
}

.current span {
    line-height: 14px;
    border-bottom: 1px solid #185abd;
}

.tab-actions {
    display: flex;
    gap: 6px;
    margin-left: auto;
}

.tab-actions button {
    width: 24px;
    height: 18px;
    border: 1px solid #c4c4c4;
    border-radius: 3px;
    background: #fff;
}

.tab-actions button:nth-child(2) {
    width: 26px;
}

.tab-actions .share {
    border-color: #185abd;
    background: #185abd;
    color: #fff;
}

.ribbon {
    display: flex;
    height: 74px;
    margin: 0 6px;
    padding: 3px 0;
    border-radius: 6px;
    background: #fff;
    box-shadow: 0 1px 2px #c8c8c8;
}

.group {
    display: flex;
    flex-direction: column;
    justify-content: space-between;
    align-items: center;
    padding-top: 1px;
    border-right: 1px solid #dcdcdc;
}

.tool {
    flex-direction: column;
    font-size: 8px;
    line-height: 12px;
    gap: 3px;
}

.chev {
    margin-top: 1px;
}

.clip {
    width: 66px;
}

.font {
    width: 41px;
}

.para {
    width: 45px;
}

.style {
    width: 43px;
}

.edit {
    width: 57px;
}

.acro {
    width: 56px;
}

.addin {
    width: 47px;
}

.clip-tools {
    display: flex;
    gap: 6px;
}

.clip-side {
    display: flex;
    flex-direction: column;
    gap: 7px;
}

.pale {
    color: #aaa;
}

.pdf {
    color: #3f7fd8;
}

.grid-icon {
    color: #d0603a;
}

.caption {
    display: flex;
    align-items: center;
    gap: 10px;
    font-size: 7px;
    line-height: 10px;
    white-space: nowrap;
}

.collapse {
    align-self: flex-end;
    margin: 0 7px 4px auto;
}

.word-body {
    flex: 1;
    display: flex;
    min-height: 0;
    padding-left: 80px;
}

.word-page {
    flex: 1;
    min-width: 0;
    margin-right: 80px;
    padding: 16px 43px 0 44px;
    overflow: hidden;
    background: #fff;
    border: 1px solid #ddd;
    border-width: 0 1px;
}

.word-scroll {
    display: flex;
    flex-direction: column;
    align-items: center;
    width: 13px;
    padding: 5px 0;
    color: #666;
}

.word-scroll span {
    width: 6px;
    height: 35px;
    margin: 6px 0 auto;
    border-radius: 3px;
    background: #777;
}

.status {
    display: flex;
    align-items: center;
    gap: 13px;
    height: 17px;
    padding: 0 18px 0 8px;
    border-top: 1px solid #ddd;
    background: #f5f5f5;
    font-size: 8px;
    white-space: nowrap;
}

.status-right {
    display: flex;
    align-items: center;
    align-self: stretch;
    margin-left: auto;
}

.focus {
    gap: 2px;
    margin-right: 8px;
}

.view {
    width: 30px;
    align-self: stretch;
}

.on {
    background: #dedede;
}

.zoom-step {
    width: 14px;
}

.zoom {
    appearance: none;
    width: 74px;
    height: 9px;
    background: linear-gradient(#999, #999) center / 100% 1px no-repeat;
}

.zoom::-webkit-slider-thumb {
    appearance: none;
    width: 4px;
    height: 9px;
    background: #555;
}

.percent {
    margin-left: 5px;
    width: 17px;
    text-align: right;
}

/* Taskbar */

.taskbar {
    display: grid;
    grid-template-columns: 1fr auto 1fr;
    align-items: center;
    background: #1c1c1c;
    border-top: 1px solid #383838;
    color: #fff;
}

.apps {
    grid-column: 2;
    display: flex;
    align-items: center;
}

.apps button {
    position: relative;
    width: 33px;
    height: 30px;
}

.open::after {
    content: '';
    position: absolute;
    bottom: 0;
    width: 4px;
    height: 2px;
    border-radius: 1px;
    background: #8a8a8a;
}

.apps .focused {
    width: 28px;
    margin: 0 2px;
    border-radius: 3px;
    background: #2e2e2e;
}

.focused::after {
    width: 12px;
    background: #60cdd8;
}

.search {
    display: flex;
    align-items: center;
    gap: 6px;
    width: 164px;
    height: 24px;
    margin: 0 3px;
    padding: 0 4px 0 8px;
    border: 1px solid #4a4a4a;
    border-radius: 12px;
    background: #3a3a3a;
}

.search input {
    flex: 1;
    min-width: 0;
    border: none;
    background: none;
    color: #fff;
    font: inherit;
    font-size: 10px;
}

.search input::placeholder {
    color: #ccc;
}

.tray {
    display: flex;
    align-items: center;
    justify-content: flex-end;
    gap: 6px;
    padding-right: 14px;
}

.tray button:first-child {
    margin-right: 7px;
}

.clock {
    margin-left: 6px;
    line-height: 12px;
    text-align: right;
}
```
